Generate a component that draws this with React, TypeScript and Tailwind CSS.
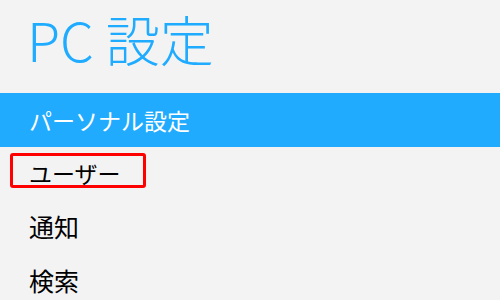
const font = { fontFamily: '"Noto Sans CJK JP", "Noto Sans", sans-serif' };

const items = ["通知", "検索"];

export default function App() {
  return (
    <div className="w-[500px] h-[300px] overflow-hidden bg-[#f3f3f3]" style={font}>
      <div className="h-[93px] pl-[27px]">
        <h1 className="text-[54px] leading-[78px] font-light text-[#1fabff] whitespace-nowrap">PC 設定</h1>
      </div>
      <div className="h-[54px] flex items-center pl-[29px] bg-[#21abff]">
        <span className="text-[23px] leading-none text-white">パーソナル設定</span>
      </div>
      <div className="relative h-[52px] flex items-center pl-[29px]">
        <span className="text-[23px] leading-none text-black">ユーザー</span>
        <div className="absolute left-[10px] top-[6px] w-[136px] h-[35px] border-[3px] border-[#ff0000] rounded-[3px]" />
      </div>
      {items.map((label) => (
        <div key={label} className="h-[54px] flex items-center pl-[29px]">
          <span className="text-[25px] leading-none text-black">{label}</span>
        </div>
      ))}
    </div>
  );
}
